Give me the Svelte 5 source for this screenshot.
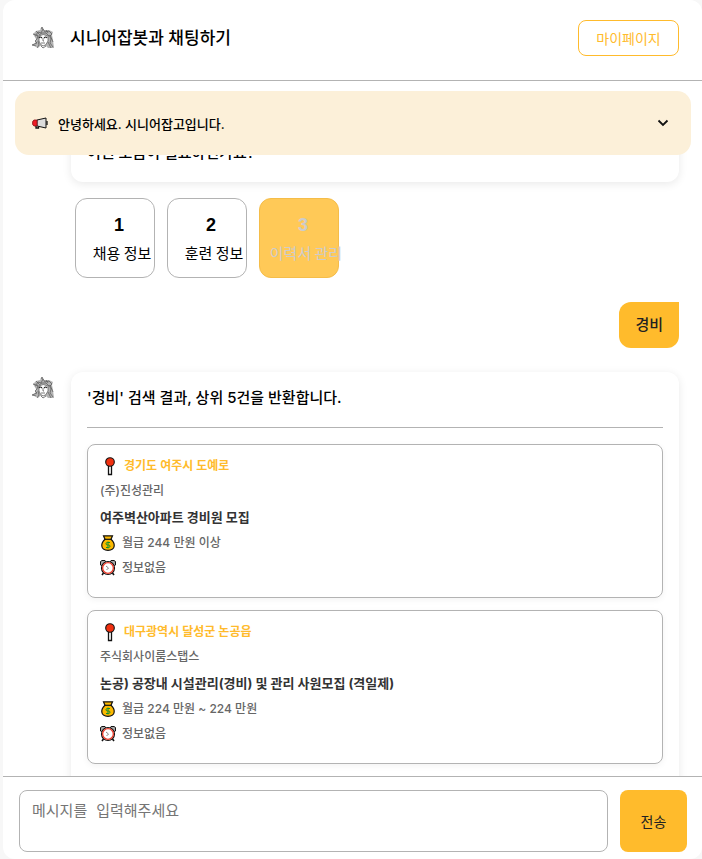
<script>
  const options = [
    { number: 1, label: '채용 정보' },
    { number: 2, label: '훈련 정보' },
    { number: 3, label: '이력서 관리', disabled: true }
  ];

  const jobs = [
    {
      place: '경기도 여주시 도예로',
      company: '(주)진성관리',
      title: '여주벽산아파트 경비원 모집',
      pay: '월급 244 만원 이상',
      time: '정보없음'
    },
    {
      place: '대구광역시 달성군 논공읍',
      company: '주식회사이룸스탭스',
      title: '논공) 공장내 시설관리(경비) 및 관리 사원모집 (격일제)',
      pay: '월급 224 만원 ~ 224 만원',
      time: '정보없음'
    }
  ];

  let message = $state('');
</script>

{#snippet avatar()}
  <svg class="avatar" viewBox="0 0 24 24" fill="none" stroke="#555" stroke-width="0.7" aria-hidden="true">
    <path d="M2 8 L5 5 L9 4 L11 1 L13 4 L18 4 L22 6 L21 9 L22 14 L23 22 L17 22 L15 20 L9 20 L7 22 L4 20 L1 19 L4 17 L5 13 Z" fill="#b4b4b4" stroke="none" />
    <path d="M8 10 Q12 7 17 10 L17 15 Q15 20 12 20 Q9 19 8 15 Z" fill="#fff" />
    <path d="M2 8 L5 9 L7 6 L10 7 L12 3 L14 6 L18 5 L21 8 L19 10 M5 5 L8 8 M10 3 L11 1 L12 3 M4 10 L7 9 L6 13 L4 15 L6 17 L1 19 L5 20 M7 15 L8 19 L6 22 M18 9 L20 13 L19 17 L22 21 M17 16 L20 22 M19 9 L22 16 M8 9 L11 7 L15 7 L18 10 M15 4 L17 7" />
    <path d="M8 12 Q9 10 11 12 M13 12 Q15 10 16 12" stroke="#222" stroke-width="1.1" />
    <path d="M12 12 L12 15 L13 15 M10 17 L14 17 M10 20 L12 22 L15 20" stroke="#444" />
  </svg>
{/snippet}

{#snippet pin()}
  <svg class="icon pin" viewBox="0 0 20 20" aria-hidden="true">
    <path d="M8.5 9h3v9.500h-3z" fill="#fff" stroke="#111" stroke-width="1.3" />
    <circle cx="10" cy="6" r="4.3" fill="#f1300f" stroke="#111" stroke-width="1.1" />
  </svg>
{/snippet}

{#snippet bag()}
  <svg class="icon" viewBox="0 0 16 16" aria-hidden="true">
    <path d="M3.500 .8h9l-1.500 3.500q3.500 3 3.200 6.700q-.5 4.300-6.200 4.300t-6.200-4.300q-.3-3.700 3.200-6.700z" fill="#fcb900" stroke="#111" stroke-width="1.200" />
    <path d="M4.500 4.300h7" stroke="#111" stroke-width="1.200" />
    <path d="M10 7.500H7.500q-1.500 0-1.500 1.200T7.500 10h1q1.500 0 1.500 1.200t-1.500 1.300H6M8 6.500v7" fill="none" stroke="#13912d" />
  </svg>
{/snippet}

{#snippet clock()}
  <svg class="icon" viewBox="0 0 16 16" aria-hidden="true">
    <path d="M3.500 13l-1.500 2M12.500 13l1.500 2" stroke="#111" stroke-width="1.600" />
    <path d="M.5 5V1.500L2 .5h3L6 2 2 6zM15.500 5V1.500L14 .5h-3L10 2l4 4z" fill="#aaa" stroke="#111" />
    <circle cx="8" cy="8" r="6.500" fill="#fff" stroke="#111" stroke-width="1.200" />
    <circle cx="8" cy="8" r="5.400" fill="#fff" stroke="#ea3d2c" stroke-width="1.400" />
    <path d="M6 6l2.500 2L6.500 10" fill="none" stroke="#666" stroke-width="0.800" />
  </svg>
{/snippet}

<main class="panel">
  <header>
    {@render avatar()}
    <h1>시니어잡봇과 채팅하기</h1>
    <button class="mypage" type="button">마이페이지</button>
  </header>

  <section class="chat">
    <button class="notice" type="button" aria-expanded="false">
      <svg class="horn" viewBox="0 0 16 14" aria-hidden="true">
        <path d="M5 4L14 2v10L5 10z" fill="#dcdcdc" stroke="#111" />
        <path d="M5 4H2Q.5 4.500 .5 7T2 10h3z" fill="#ee1c25" stroke="#8a1016" stroke-width="0.800" />
        <path d="M4 10v2h2.500V10.500M15 5v4" fill="none" stroke="#111" stroke-width="1.300" />
      </svg>
      <span>안녕하세요. 시니어잡고입니다.</span>
      <svg class="chevron" viewBox="0 0 12 8" aria-hidden="true">
        <path d="M1.500 1.500L6 6l4.500-4.500" fill="none" stroke="#111" stroke-width="1.800" />
      </svg>
    </button>

    <div class="bubble greeting"><p>어떤 도움이 필요하신가요?</p></div>

    <div class="options">
      {#each options as option}
        <button class="option" type="button" disabled={option.disabled}>
          <strong>{option.number}</strong>
          <span>{option.label}</span>
        </button>
      {/each}
    </div>

    <p class="mine">경비</p>

    <div class="reply">
      {@render avatar()}
      <div class="bubble results">
        <p>'경비' 검색 결과, 상위 5건을 반환합니다.</p>
        <hr />
        {#each jobs as job}
          <article class="job">
            <p class="row place">{@render pin()}{job.place}</p>
            <p class="row">{job.company}</p>
            <h2>{job.title}</h2>
            <p class="row">{@render bag()}{job.pay}</p>
            <p class="row">{@render clock()}{job.time}</p>
          </article>
        {/each}
      </div>
    </div>
  </section>

  <form class="composer" onsubmit={(e) => e.preventDefault()}>
    <textarea bind:value={message} placeholder="메시지를 입력해주세요" aria-label="메시지"></textarea>
    <button class="send" type="submit">전송</button>
  </form>
</main>

<style>
  :global(body) {
    margin: 0;
    background: #f7f7f7;
  }

  * {
    box-sizing: border-box;
  }

  p,
  h1,
  h2 {
    margin: 0;
  }

  button {
    padding: 0;
    border: 0;
    background: none;
    font-family: 'Noto Sans CJK KR', sans-serif;
    cursor: pointer;
  }

  .panel {
    display: flex;
    flex-direction: column;
    height: 100vh;
    margin-left: 3px;
    overflow: hidden;
    border-radius: 12px;
    background: #fff;
    color: #000;
    font-family: Inter, 'Noto Sans CJK KR', sans-serif;
  }

  header {
    display: flex;
    flex: none;
    align-items: center;
    height: 81px;
    padding: 0 23px 4px 28px;
    border-bottom: 1px solid #b3b3b3;
  }

  .avatar {
    flex: none;
    width: 24px;
    height: 24px;
  }

  h1 {
    flex: 1;
    margin-left: 15px;
    font-size: 17px;
    font-weight: 500;
    line-height: 24px;
  }

  .mypage {
    width: 101px;
    height: 36px;
    border: 1px solid #ffbb2c;
    border-radius: 8px;
    color: #ffbb2c;
    font-size: 14px;
  }

  .chat {
    position: relative;
    display: flex;
    flex: 1;
    flex-direction: column;
    min-height: 0;
    padding: 20px 23px 0 28px;
    overflow: hidden;
  }

  .notice {
    position: absolute;
    z-index: 1;
    top: 10px;
    right: 11px;
    left: 12px;
    display: flex;
    align-items: center;
    height: 64px;
    padding: 0 22px 0 17px;
    border-radius: 14px;
    background: #fcf0d9;
    color: #000;
    font-family: inherit;
    font-size: 13px;
    font-weight: 500;
    text-align: left;
  }

  .notice span {
    flex: 1;
    margin-left: 10px;
  }

  .horn {
    width: 16px;
    height: 14px;
  }

  .chevron {
    width: 12px;
    height: 8px;
  }

  .bubble {
    border-radius: 12px;
    background: #fff;
    box-shadow: 0 2px 10px rgba(0, 0, 0, 0.09);
    font-size: 15px;
    font-weight: 500;
    line-height: 20px;
  }

  .greeting {
    flex: none;
    margin-left: 40px;
    padding: 42px 16px 19px;
  }

  .options {
    display: flex;
    flex: none;
    gap: 12px;
    margin: 16px 0 0 44px;
  }

  .option {
    display: flex;
    flex-direction: column;
    align-items: center;
    justify-content: center;
    gap: 4px;
    width: 80px;
    height: 80px;
    padding: 2px 0 0 8px;
    border: 1px solid #b3b3b3;
    border-radius: 12px;
    color: #000;
    font-size: 15px;
    line-height: 24px;
    white-space: nowrap;
  }

  .option strong {
    font-family: 'Liberation Sans', sans-serif;
    font-size: 18px;
    font-weight: 700;
  }

  .option span {
    margin-left: 6px;
  }

  .option:disabled {
    border-color: #f5bd49;
    background: #ffc957;
    color: #cccccc;
  }

  .mine {
    flex: none;
    align-self: flex-end;
    margin-top: 24px;
    padding: 12px 16px;
    border-radius: 12px 0 12px 12px;
    background: #ffbb2c;
    color: #222;
    font-size: 15px;
    font-weight: 500;
    line-height: 22px;
  }

  .reply {
    display: flex;
    flex: none;
    align-items: flex-start;
    gap: 16px;
    margin-top: 24px;
  }

  .reply .avatar {
    margin-top: 4px;
  }

  .results {
    flex: 1;
    min-width: 0;
    padding: 16px 16px 24px;
  }

  hr {
    height: 1px;
    margin: 19px 0 16px;
    border: 0;
    background: #b3b3b3;
  }

  .job {
    display: flex;
    flex-direction: column;
    gap: 7px;
    height: 154px;
    padding: 12px;
    border: 1px solid #b3b3b3;
    border-radius: 8px;
    box-shadow: 0 2px 6px rgba(0, 0, 0, 0.05);
  }

  .job + .job {
    margin-top: 12px;
  }

  .row {
    display: flex;
    align-items: center;
    gap: 6px;
    color: #666;
    font-size: 12px;
    line-height: 18px;
  }

  .place {
    gap: 4px;
    color: #ffbb2c;
    font-weight: 600;
  }

  h2 {
    color: #333;
    font-size: 13px;
    font-weight: 700;
    line-height: 20px;
  }

  .icon {
    width: 16px;
    height: 16px;
  }

  .pin {
    width: 20px;
    height: 20px;
    margin: -1px 0;
  }

  .composer {
    display: flex;
    flex: none;
    gap: 12px;
    padding: 13px 15px 7px 16px;
    border-top: 1px solid #b3b3b3;
  }

  textarea {
    flex: 1;
    min-width: 0;
    height: 62px;
    padding: 11px 12px;
    border: 1px solid #b3b3b3;
    border-radius: 8px;
    font-family: 'Liberation Mono', 'Noto Sans CJK KR', monospace;
    font-size: 15px;
    line-height: 22px;
    resize: none;
  }

  textarea::placeholder {
    color: #757575;
  }

  .send {
    width: 67px;
    height: 62px;
    border-radius: 8px;
    background: #ffbb2c;
    color: #222;
    font-size: 14px;
  }
</style>
